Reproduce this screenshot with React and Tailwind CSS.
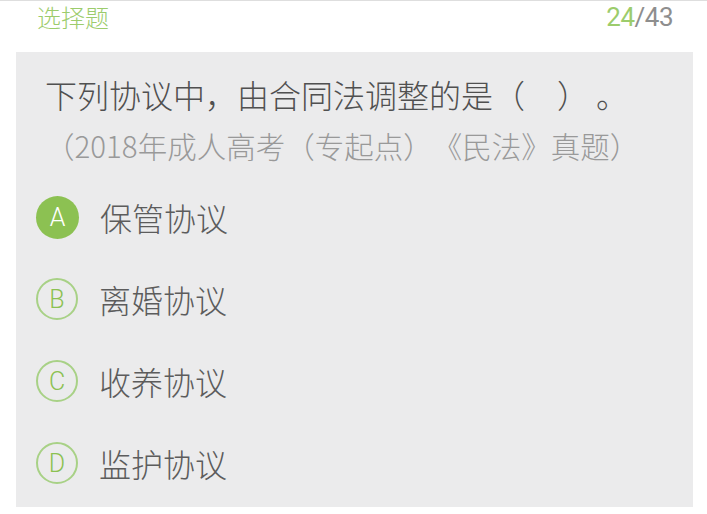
import React from 'react';

const options = [
  { key: 'A', text: '保管协议', selected: true },
  { key: 'B', text: '离婚协议' },
  { key: 'C', text: '收养协议' },
  { key: 'D', text: '监护协议' },
];

const Option = ({ letter, text, selected }) => (
  <div className="flex items-center h-[82px] pl-[20px]">
    <div
      className={
        selected
          ? 'w-[43px] h-[43px] rounded-full bg-[#8cc152] text-white flex items-center justify-center text-[25px] font-light leading-none'
          : 'w-[42px] h-[42px] rounded-full border-2 border-[#a8d186] text-[#8cc152] flex items-center justify-center text-[25px] font-light leading-none'
      }
      style={{ fontFamily: 'Roboto, "Liberation Sans", sans-serif' }}
    >
      {letter}
    </div>
    <span className="ml-[21px] text-[32px] leading-[40px] font-light text-[#5c5c5c]">{text}</span>
  </div>
);

export default function App() {
  return (
    <div
      className="w-[707px] h-[514px] bg-white border-t border-[#dedede] overflow-hidden"
      style={{ fontFamily: '"Noto Sans CJK SC", "Noto Sans", sans-serif' }}
    >
      {/* Header */}
      <div className="flex items-center justify-between pl-[37px] pr-[34px] h-[32px]">
        <span className="text-[24px] leading-[32px] font-light text-[#9ccc6c]">选择题</span>
        <span
          className="text-[26px] leading-[32px] tracking-[-0.5px]"
          style={{ fontFamily: 'Roboto, "Liberation Sans", sans-serif' }}
        >
          <span className="text-[#9ccc6c]">24</span>
          <span className="text-[#8e8e8e]">/43</span>
        </span>
      </div>

      {/* Question card */}
      <div className="mt-[19px] ml-[16px] mr-[14px] h-[455px] bg-[#ebebec]">
        <div className="pt-[21px] pl-[29px] [text-spacing-trim:space-all]">
          <p className="text-[32px] leading-[42px] font-light text-[#505050]">下列协议中，由合同法调整的是（　） 。</p>
          <p className="mt-[12px] text-[29.5px] leading-[36px] font-light text-[#999999]">
            （2018年成人高考（专起点）《民法》真题）
          </p>
        </div>
        <div className="mt-[13px]">
          {options.map((o) => (
            <Option key={o.key} letter={o.key} text={o.text} selected={o.selected} />
          ))}
        </div>
      </div>
    </div>
  );
}
